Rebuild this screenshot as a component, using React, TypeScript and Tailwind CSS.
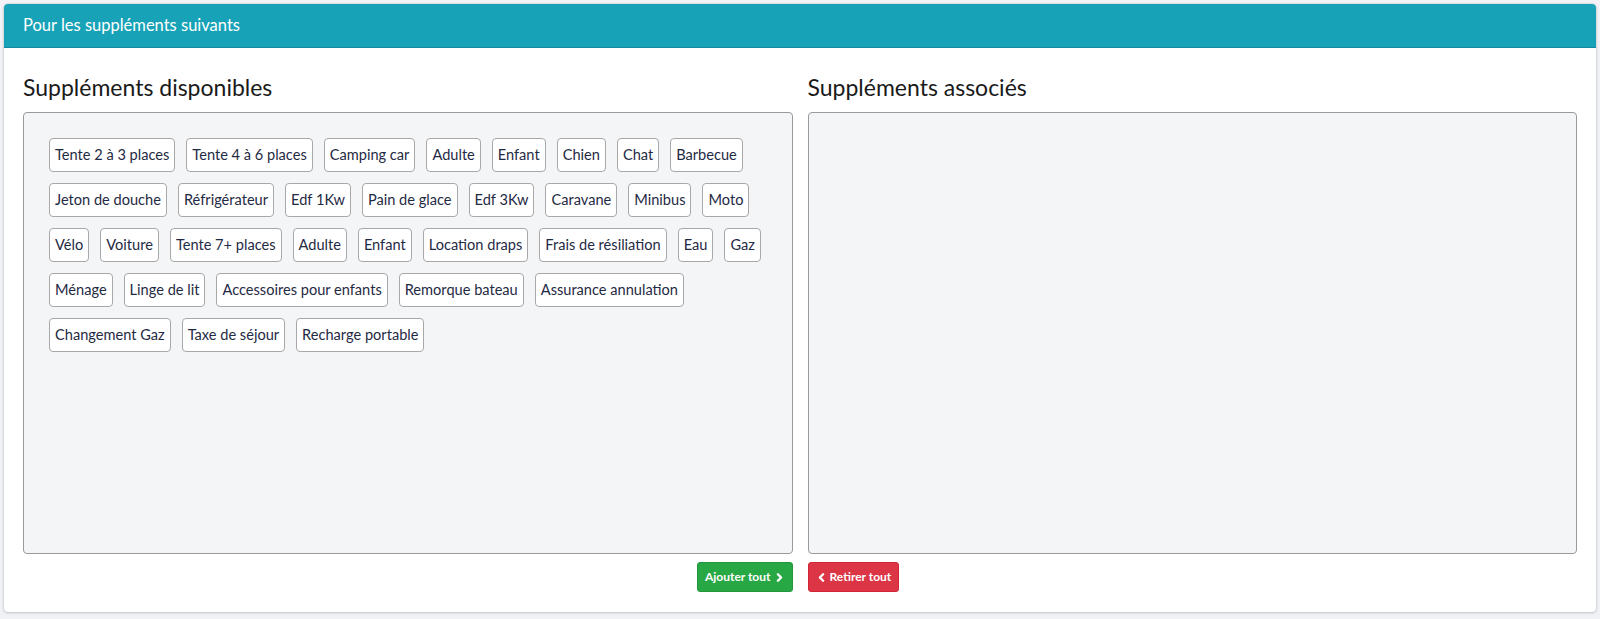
import React from "react";
import { ChevronLeft, ChevronRight } from "lucide-react";

const rows: string[][] = [
  ["Tente 2 à 3 places", "Tente 4 à 6 places", "Camping car", "Adulte", "Enfant", "Chien", "Chat", "Barbecue"],
  ["Jeton de douche", "Réfrigérateur", "Edf 1Kw", "Pain de glace", "Edf 3Kw", "Caravane", "Minibus", "Moto"],
  ["Vélo", "Voiture", "Tente 7+ places", "Adulte", "Enfant", "Location draps", "Frais de résiliation", "Eau", "Gaz"],
  ["Ménage", "Linge de lit", "Accessoires pour enfants", "Remorque bateau", "Assurance annulation"],
  ["Changement Gaz", "Taxe de séjour", "Recharge portable"],
];

function Chip({ label }: { label: string }) {
  return (
    <div className="h-[34px] px-[5px] flex items-center bg-white border border-[#a8a8a8] rounded-[4px] text-[14.6px] text-[#1f2a44] whitespace-nowrap">
      {label}
    </div>
  );
}

export default function App() {
  return (
    <div className="h-[619px] bg-[#f0f2f5] p-1 font-['Lato',sans-serif]">
      <div className="bg-white rounded-[4px] shadow-[0_0_2px_rgba(0,0,0,0.2),0_1px_3px_rgba(0,0,0,0.15)] h-[608px] flex flex-col">
        <div className="h-[44px] bg-[#17a2b8] border-b border-[#12899c] rounded-t-[4px] px-[19px] flex items-center text-white text-[16.5px]">
          Pour les suppléments suivants
        </div>
        <div className="px-[19px] pt-[24px]">
          <div className="grid grid-cols-2 gap-x-[15px]">
            <div>
              <div className="h-[30px] leading-[30px] text-[23px] text-[#1a1a1a] mb-[10px]">Suppléments disponibles</div>
              <div className="h-[442px] bg-[#f4f5f7] border border-[#9a9a9a] rounded-[4px] p-[25px] flex flex-col gap-y-[11px]">
                {rows.map((r, i) => (
                  <div key={i} className="flex gap-x-[11px]">
                    {r.map((l, j) => (
                      <Chip key={j} label={l} />
                    ))}
                  </div>
                ))}
              </div>
            </div>
            <div>
              <div className="h-[30px] leading-[30px] text-[23px] text-[#1a1a1a] mb-[10px]">Suppléments associés</div>
              <div className="h-[442px] bg-[#f4f5f7] border border-[#9a9a9a] rounded-[4px]" />
            </div>
          </div>
          <div className="grid grid-cols-2 gap-x-[15px] mt-[8px]">
            <div className="flex justify-end">
              <button className="h-[30px] pl-[7px] pr-[6px] flex items-center gap-[2px] bg-[#28a745] border border-[#23963d] rounded-[3px] text-white text-[12px] font-bold">
                Ajouter tout
                <ChevronRight size={13} strokeWidth={4.5} />
              </button>
            </div>
            <div className="flex justify-start">
              <button className="h-[30px] pl-[6px] pr-[7px] flex items-center gap-[2px] bg-[#dc3545] border border-[#d32535] rounded-[3px] text-white text-[12px] font-bold">
                <ChevronLeft size={13} strokeWidth={4.5} />
                Retirer tout
              </button>
            </div>
          </div>
        </div>
      </div>
    </div>
  );
}
